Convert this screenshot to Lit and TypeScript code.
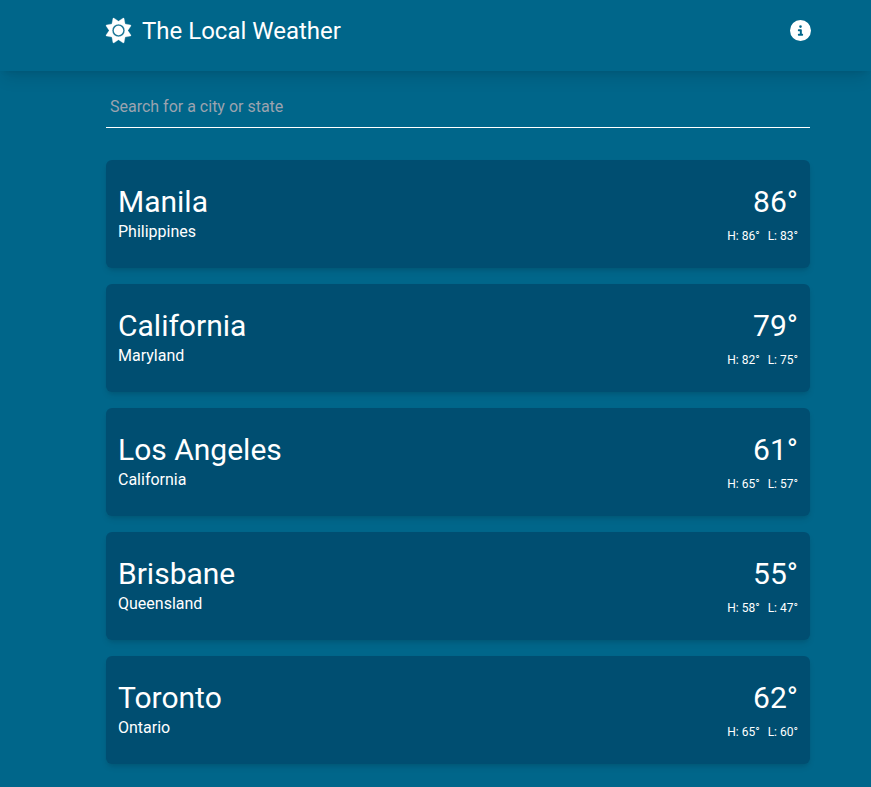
import { LitElement, html, css } from "lit";
import { customElement } from "lit/decorators.js";

interface City {
  name: string;
  region: string;
  temp: number;
  high: number;
  low: number;
}

const cities: City[] = [
  { name: "Manila", region: "Philippines", temp: 86, high: 86, low: 83 },
  { name: "California", region: "Maryland", temp: 79, high: 82, low: 75 },
  { name: "Los Angeles", region: "California", temp: 61, high: 65, low: 57 },
  { name: "Brisbane", region: "Queensland", temp: 55, high: 58, low: 47 },
  { name: "Toronto", region: "Ontario", temp: 62, high: 65, low: 60 },
];

@customElement("app-root")
export class AppRoot extends LitElement {
  static styles = css`
    :host {
      display: block;
      box-sizing: border-box;
      height: 787px;
      overflow: hidden;
      background: #00668a;
      color: #fff;
      font: 16px/24px Roboto, sans-serif;
    }
    *, *::before, *::after { box-sizing: border-box; }
    header {
      height: 71px;
      background: #00668a;
      box-shadow: 0 10px 15px -3px rgba(0, 0, 0, 0.1), 0 4px 6px -4px rgba(0, 0, 0, 0.1);
    }
    nav {
      display: flex;
      align-items: center;
      width: 705px;
      height: 61px;
      margin-left: 106px;
    }
    .logo {
      display: flex;
      align-items: center;
      gap: 11px;
      flex: 1;
    }
    .sun {
      width: 25px;
      height: 25px;
      display: block;
      overflow: visible;
      stroke: #fff;
      stroke-width: 6px;
      stroke-linejoin: round;
    }
    .title { font-size: 24px; line-height: 32px; margin: 0; font-weight: 400; }
    .info { width: 21px; height: 21px; display: block; }
    main { width: 704px; margin-left: 106px; padding-top: 16px; }
    input {
      display: block;
      width: 100%;
      height: 41px;
      padding: 7px 4px 9px;
      border: 0;
      border-bottom: 1px solid #fff;
      border-radius: 0;
      background: transparent;
      color: #fff;
      font: inherit;
      outline: none;
    }
    input::placeholder { color: #9ca3af; opacity: 1; }
    .list { display: flex; flex-direction: column; gap: 16px; margin-top: 32px; }
    .card {
      display: flex;
      justify-content: space-between;
      height: 108px;
      padding: 24px 12px;
      border-radius: 6px;
      background: #004e71;
      box-shadow: 0 4px 6px -1px rgba(0, 0, 0, 0.1), 0 2px 4px -2px rgba(0, 0, 0, 0.1);
    }
    .name, .temp { font-size: 30px; line-height: 36px; font-weight: 400; margin: 0; }
    .right { text-align: right; }
    .range { display: flex; gap: 8px; font-size: 12px; line-height: 16px; margin-top: 8px; }
  `;

  private card(c: City) {
    return html`<article class="card">
      <div>
        <h2 class="name">${c.name}</h2>
        <div>${c.region}</div>
      </div>
      <div class="right">
        <div class="temp">${c.temp}°</div>
        <div class="range"><span>H: ${c.high}°</span><span>L: ${c.low}°</span></div>
      </div>
    </article>`;
  }

  render() {
    return html`
      <header>
        <nav>
          <div class="logo">
            <svg class="sun" viewBox="0 0 512 512" fill="#fff">
              <path d="M361.5 1.2c5 2.1 8.6 6.6 9.6 11.9L391 121l107.900 19.800c5.300 1 9.800 4.600 11.900 9.600s1.500 10.700-1.600 15.200L446.900 256l62.300 90.300c3.100 4.500 3.700 10.200 1.600 15.200s-6.600 8.600-11.900 9.600L391 391 371.100 498.900c-1 5.300-4.600 9.800-9.600 11.900s-10.700 1.500-15.200-1.600L256 446.900l-90.300 62.300c-4.500 3.100-10.200 3.700-15.200 1.600s-8.600-6.600-9.600-11.900L121 391 13.100 371.100c-5.300-1-9.800-4.600-11.900-9.600s-1.500-10.700 1.600-15.200L65.100 256 2.800 165.700c-3.100-4.500-3.700-10.200-1.600-15.200s6.600-8.600 11.900-9.600L121 121 140.900 13.100c1-5.300 4.600-9.800 9.600-11.900s10.700-1.500 15.200 1.600L256 65.100 346.300 2.800c4.500-3.100 10.200-3.700 15.200-1.600zM160 256a96 96 0 1 1 192 0 96 96 0 1 1-192 0zm224 0a128 128 0 1 0-256 0 128 128 0 1 0 256 0z" />
            </svg>
            <h1 class="title">The Local Weather</h1>
          </div>
          <svg class="info" viewBox="0 0 512 512" fill="#fff">
            <path d="M256 512A256 256 0 1 0 256 0a256 256 0 1 0 0 512zM216 336h24V272H216c-13.300 0-24-10.700-24-24s10.700-24 24-24h48c13.300 0 24 10.700 24 24v88h8c13.300 0 24 10.700 24 24s-10.700 24-24 24H216c-13.300 0-24-10.700-24-24s10.700-24 24-24zm40-208a32 32 0 1 1 0 64 32 32 0 1 1 0-64z" />
          </svg>
        </nav>
      </header>
      <main>
        <input type="text" placeholder="Search for a city or state" />
        <div class="list">${cities.map((c) => this.card(c))}</div>
      </main>
    `;
  }
}
